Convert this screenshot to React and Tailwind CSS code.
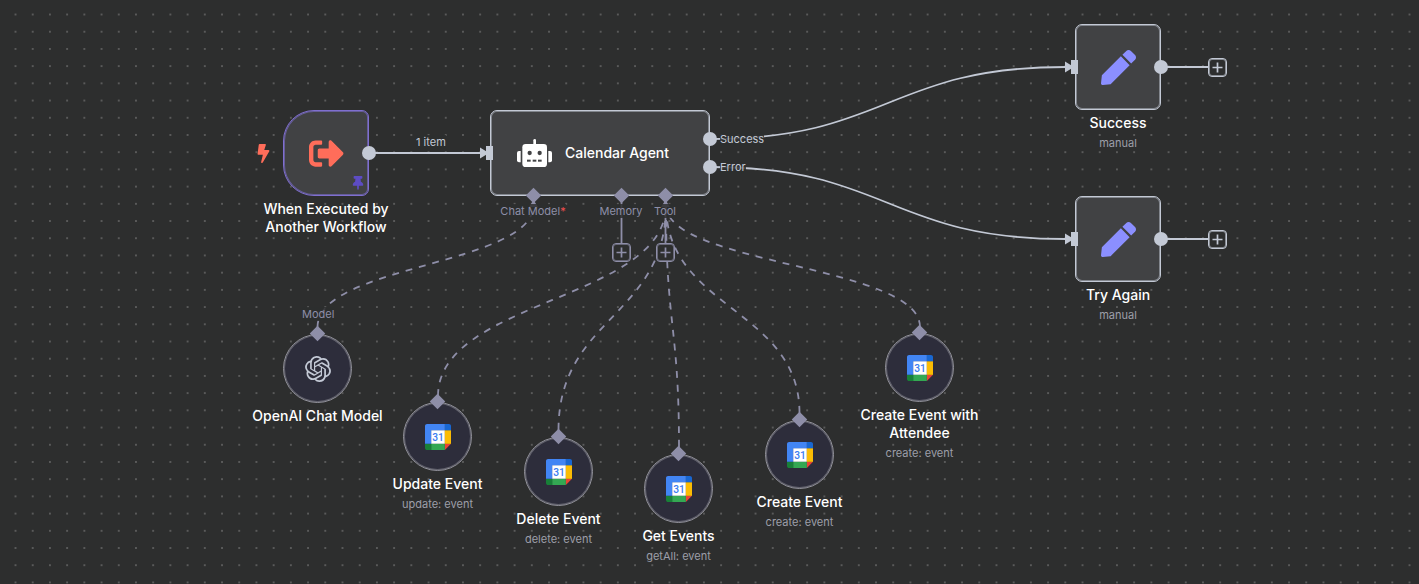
import React from "react";
import { FaBolt, FaPen, FaSignOutAlt, FaThumbtack } from "react-icons/fa";
import { SiOpenai } from "react-icons/si";

const mainEdges = [
  "M369 153 H481",
  "M710 139 C888 139 888 67 1066 67",
  "M710 167 C888 167 888 239 1066 239",
];

const mainArrows = [
  [480, 153],
  [1065, 67],
  [1065, 239],
];

const toolEdges = [
  "M317.5 327 C317.5 265 533.5 265 533.5 205",
  "M438 396 C438 300 666 300 666 205",
  "M558.5 430 C558.5 317 666 317 666 205",
  "M679 447 C679 326 666 326 666 205",
  "M799.5 413 C799.5 309 666 309 666 205",
  "M920 327 C920 265 666 265 666 205",
];

function CanvasBackground() {
  return (
    <svg className="absolute inset-0 h-full w-full" aria-hidden="true">
      <defs>
        <pattern id="dots" x="6.9" y="5.9" width="17.21" height="17.21" patternUnits="userSpaceOnUse">
          <circle cx="8.6" cy="8.6" r="0.65" fill="#a8a8a8" />
        </pattern>
      </defs>
      <rect width="100%" height="100%" fill="url(#dots)" />
    </svg>
  );
}

function Edges() {
  return (
    <svg className="absolute inset-0 h-full w-full" aria-hidden="true" fill="none">
      <g stroke="#8e8ea8" strokeWidth="1.8">
        {toolEdges.map((d) => (
          <path key={d} d={d} strokeDasharray="6.9 6.9" />
        ))}
        <path d="M621.5 196 V244" />
        <path d="M665.5 196 V244" />
      </g>
      <g fill="#8e8ea8">
        <path d="M533.5 200 l4.5 7 h-9 z" />
        <path d="M665.5 200 l4.5 7 h-9 z" />
      </g>
      <g stroke="#c3c9d5" strokeWidth="1.8">
        {mainEdges.map((d) => (
          <path key={d} d={d} />
        ))}
      </g>
      <g fill="#c3c9d5">
        {mainArrows.map(([x, y]) => (
          <path key={`${x}-${y}`} d={`M${x} ${y - 5.5} L${x + 9} ${y} L${x} ${y + 5.5} Z`} />
        ))}
      </g>
    </svg>
  );
}

function RobotIcon() {
  return (
    <svg viewBox="0 0 105 84" className="h-7 w-[35px]" aria-hidden="true">
      <g fill="#fff">
        <path d="M49 4a4 4 0 0 1 8 0v12h-8z" />
        <rect x="16" y="15" width="74" height="69" rx="10" />
        <path d="M11 36v34H6a6 6 0 0 1-6-6V42a6 6 0 0 1 6-6z" />
        <path d="M94 36v34h5a6 6 0 0 0 6-6V42a6 6 0 0 0-6-6z" />
      </g>
      <g fill="#414244">
        <circle cx="38" cy="42" r="6.5" />
        <circle cx="68" cy="42" r="6.5" />
        <rect x="30" y="62" width="11" height="6" />
        <rect x="47" y="62" width="11" height="6" />
        <rect x="63" y="62" width="11" height="6" />
      </g>
    </svg>
  );
}

function GoogleCalendarIcon() {
  return (
    <svg viewBox="186 38 76 76" className="size-[26px]" aria-hidden="true">
      <path fill="#fff" d="M244 56h-40v40h40z" />
      <path fill="#EA4335" d="M244 114l18-18h-18z" />
      <path fill="#FBBC04" d="M262 56h-18v40h18z" />
      <path fill="#34A853" d="M244 96h-40v18h40z" />
      <path fill="#188038" d="M186 96v12c0 3.3 2.7 6 6 6h12V96z" />
      <path fill="#1967D2" d="M262 56V44c0-3.3-2.7-6-6-6h-12v18z" />
      <path fill="#4285F4" d="M244 38h-52c-3.3 0-6 2.7-6 6v52h18V56h40z" />
      <text x="224" y="87" textAnchor="middle" fill="#3b7cf0" className="font-['Roboto',sans-serif] text-[30px] font-medium">
        31
      </text>
    </svg>
  );
}

function Labels({ title, subtitle }) {
  return (
    <div className="text-center">
      <h2 className="text-sm/[18px] font-medium whitespace-pre text-white">{title}</h2>
      {subtitle && <p className="mt-[3px] text-[11px]/4 text-[#9d9fa9]">{subtitle}</p>}
    </div>
  );
}

function OutputPort({ className = "" }) {
  return <span className={`size-3.5 shrink-0 rounded-full bg-[#c3c9d5] ${className}`} />;
}

function InputPort() {
  return <span className="absolute top-1/2 -left-[5px] h-3.5 w-[7px] -translate-y-1/2 bg-[#c3c9d5]" />;
}

function PortLabel({ className = "", children }) {
  return (
    <span className={`bg-[#2d2e2e]/85 text-[11px]/[14px] whitespace-nowrap ${className}`}>{children}</span>
  );
}

function AddButton({ label, className = "" }) {
  return (
    <button
      type="button"
      aria-label={label}
      className={`flex size-[19px] shrink-0 items-center justify-center rounded-[4px] border border-current bg-[#2d2e2e] inset-ring inset-ring-current/60 ${className}`}
    >
      <svg viewBox="0 0 11 11" className="size-[11px] shrink-0" fill="none" stroke="currentColor" strokeWidth="1.7">
        <path d="M5.5 0.5v10M0.5 5.5h10" />
      </svg>
    </button>
  );
}

function OutputRow({ label }) {
  return (
    <div className="flex items-center gap-[3px]">
      <OutputPort />
      <PortLabel className="text-[#c3c9d5]">{label}</PortLabel>
    </div>
  );
}

function ToolPort({ label, required, addLabel }) {
  return (
    <div className="flex w-11 flex-col items-center text-[#8e8ea8]">
      <span className="size-[11px] rotate-45 bg-[#8e8ea8]" />
      <PortLabel className="mt-[3px]">
        {label}
        {required && <span className="text-[#f04e4e]">*</span>}
      </PortLabel>
      {addLabel && <AddButton label={addLabel} className="mt-[25px]" />}
    </div>
  );
}

function EditNode({ title, className }) {
  return (
    <section className={`absolute flex w-[86px] flex-col gap-1 ${className}`}>
      <div className="flex w-max items-center text-[#c3c9d5]">
        <div className="relative flex size-[86px] items-center justify-center rounded-[7px] border border-[#c3c9d5] bg-[#414244] inset-ring inset-ring-[#c3c9d5]/50">
          <FaPen className="size-[35px] text-[#8b8fff]" />
          <InputPort />
          <OutputPort className="absolute -right-2" />
        </div>
        <span className="h-0.5 w-[47px] bg-current" />
        <AddButton label={`Add node after ${title}`} />
      </div>
      <Labels title={title} subtitle="manual" />
    </section>
  );
}

function ToolNode({ title, subtitle, className, children }) {
  return (
    <section className={`absolute flex w-[139px] flex-col items-center gap-1 ${className}`}>
      <div className="relative flex size-[69px] items-center justify-center rounded-full border border-[#94949c] bg-[#2d2d3b] inset-ring inset-ring-[#94949c]/50">
        {children || <GoogleCalendarIcon />}
        <span className="absolute -top-[7px] size-[11px] rotate-45 bg-[#8e8ea8]" />
      </div>
      <Labels title={title} subtitle={subtitle} />
    </section>
  );
}

export default function App() {
  return (
    <main className="relative min-h-screen w-full overflow-hidden bg-[#2d2e2e] font-['Inter',sans-serif]">
      <CanvasBackground />
      <Edges />

      <section className="absolute top-[110px] left-[251px] flex w-[150px] flex-col items-center gap-1">
        <div className="relative flex size-[86px] items-center justify-center rounded-l-[31px] rounded-r-[7px] border border-[#7f6fd0] bg-[#414244] inset-ring inset-ring-[#7f6fd0]/60">
          <FaBolt className="absolute right-[95px] size-[19px] text-[#ff6d5a]" />
          <FaSignOutAlt className="size-[35px] text-[#ff6d5a]" />
          <FaThumbtack className="absolute right-[3px] bottom-[5px] size-3.5 text-[#5d4cc4]" />
          <OutputPort className="absolute -right-2" />
        </div>
        <Labels title={"When Executed by\nAnother Workflow"} />
      </section>
      <PortLabel className="absolute top-[135px] left-[416px] text-[#c3c9d5]">1 item</PortLabel>

      <section className="absolute top-[110px] left-[490px] flex h-[86px] w-[220px] items-center gap-[13px] rounded-[7px] border border-[#c3c9d5] bg-[#414244] pl-[26px] inset-ring inset-ring-[#c3c9d5]/50">
        <RobotIcon />
        <h2 className="text-sm font-medium text-white">Calendar Agent</h2>
        <InputPort />
        <div className="absolute top-[21px] left-[212px] flex flex-col gap-3.5">
          <OutputRow label="Success" />
          <OutputRow label="Error" />
        </div>
        <div className="absolute top-[79px] left-5 flex">
          <ToolPort label="Chat Model" required />
          <span className="w-11" />
          <ToolPort label="Memory" addLabel="Add memory" />
          <ToolPort label="Tool" addLabel="Add tool" />
        </div>
      </section>

      <EditNode title="Success" className="top-6 left-[1075px]" />
      <EditNode title="Try Again" className="top-[196px] left-[1075px]" />

      <PortLabel className="absolute top-[307px] left-[302px] text-[#8e8ea8]">Model</PortLabel>
      <ToolNode title="OpenAI Chat Model" className="top-[334px] left-[248px]">
        <SiOpenai className="size-[26px] text-[#c3c9d5]" />
      </ToolNode>
      <ToolNode title="Update Event" subtitle="update: event" className="top-[402px] left-[368px]" />
      <ToolNode title="Delete Event" subtitle="delete: event" className="top-[437px] left-[489px]" />
      <ToolNode title="Get Events" subtitle="getAll: event" className="top-[454px] left-[609px]" />
      <ToolNode title="Create Event" subtitle="create: event" className="top-[420px] left-[730px]" />
      <ToolNode title={"Create Event with\nAttendee"} subtitle="create: event" className="top-[333px] left-[850px]" />
    </main>
  );
}
